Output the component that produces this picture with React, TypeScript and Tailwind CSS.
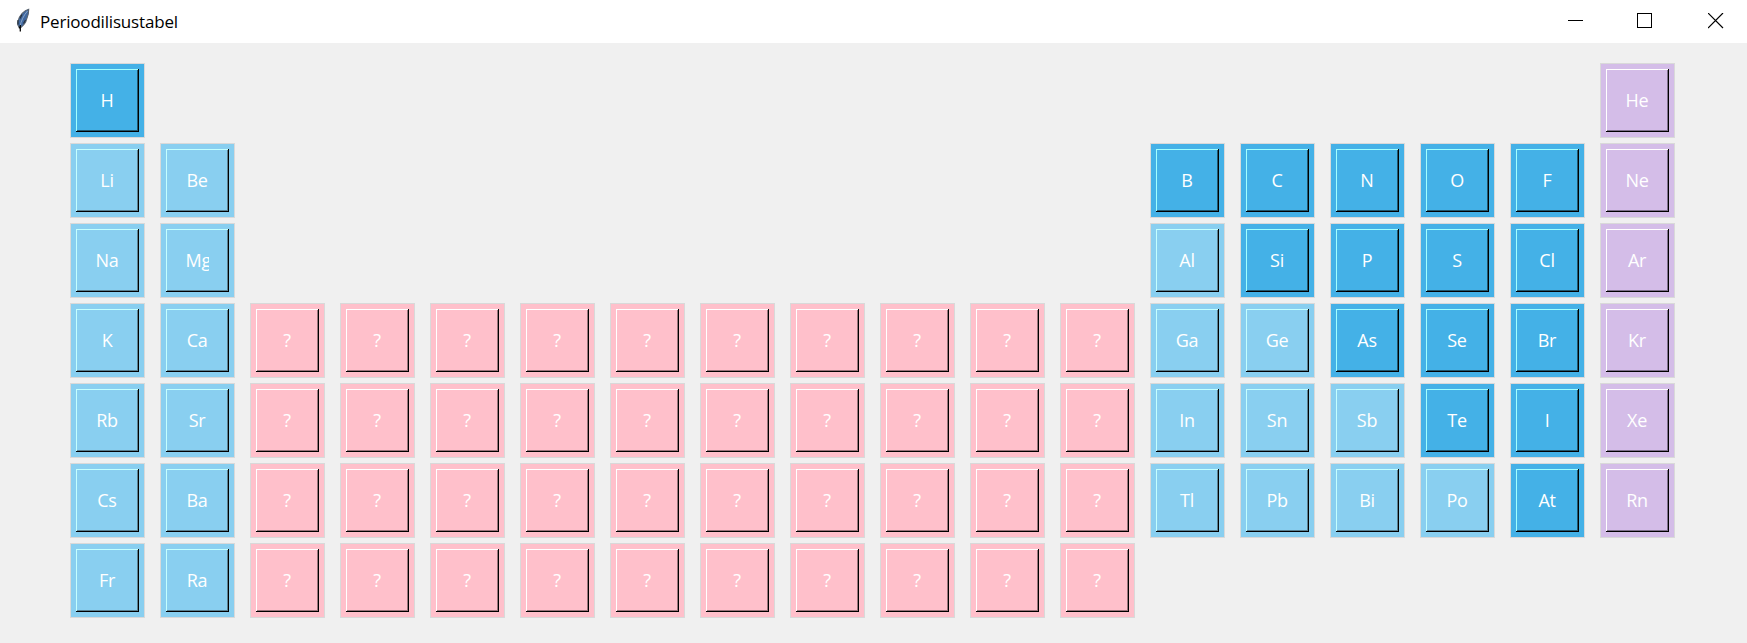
import React from "react";

type Kind = "n" | "m" | "g" | "t";

const tone: Record<Kind, string> = {
  n: "bg-[#44b1e7] [--hi:#a2ffff] [--lo:#22586f]",
  m: "bg-[#89cff0] [--hi:#c4ffff] [--lo:#5a8090]",
  g: "bg-[#d4bde8] [--hi:#ffffff] [--lo:#7f718b]",
  t: "bg-[#ffc0cb] [--hi:#ffffff] [--lo:#997379]",
};

const unknown = Array(10).fill("t:?").join(" ");
const gap = (count: number) => Array(count).fill(".").join(" ");

const rows = [
  `n:H ${gap(16)} g:He`,
  `m:Li m:Be ${gap(10)} n:B n:C n:N n:O n:F g:Ne`,
  `m:Na m:Mg ${gap(10)} m:Al n:Si n:P n:S n:Cl g:Ar`,
  `m:K m:Ca ${unknown} m:Ga m:Ge n:As n:Se n:Br g:Kr`,
  `m:Rb m:Sr ${unknown} m:In m:Sn m:Sb n:Te n:I g:Xe`,
  `m:Cs m:Ba ${unknown} m:Tl m:Pb m:Bi m:Po n:At g:Rn`,
  `m:Fr m:Ra ${unknown} ${gap(6)}`,
].map((row) => row.split(" "));

function Tile({ kind, symbol }: { kind: Kind; symbol: string }) {
  return (
    <div className={`h-[75px] w-[75px] border border-[#d9d9d9] p-[5px] ${tone[kind]}`}>
      <button className="flex h-[63px] w-[63px] items-center justify-center pr-px pb-[2px] text-[18px] leading-6 tracking-[-0.3px] text-white shadow-[inset_-1px_-1px_0_#000,inset_1px_1px_0_var(--hi),inset_-2px_-2px_0_var(--lo)]">
        <span className={symbol === "Mg" ? "w-[23px] overflow-hidden" : ""}>{symbol}</span>
      </button>
    </div>
  );
}

function Feather() {
  return (
    <svg className="ml-[16px] h-[26px] w-[14px]" viewBox="0 0 14 26">
      <path d="M12.7 1.2C8.6 2 3 7.500 1.700 14c-.3 2 .1 3.700 1.300 5.200l1.800.3C8.500 16.500 10 14.500 10.500 11.500 12 8 12.900 4.500 12.700 1.200Z" fill="#4068a0" stroke="#59636f" strokeWidth="1.100" />
      <path d="M11.500 3C7.500 7.500 5 13 3.900 19" fill="none" stroke="#9db4cf" strokeWidth=".8" />
      <path d="M2 12v4.500M6 6.500l-2 4M9.500 12l-2 3.500" fill="none" stroke="#28313d" strokeWidth="1.200" />
      <path d="M4.300 17v6.500M3.500 18.500v2" fill="none" stroke="#050505" strokeWidth="1.300" />
    </svg>
  );
}

export default function App() {
  return (
    <div className="flex h-[643px] w-[1747px] flex-col overflow-hidden bg-[#f0f0f0] font-['Open_Sans','Noto_Sans',sans-serif]">
      <header className="flex h-[43px] shrink-0 items-start justify-between bg-white">
        <div className="flex pt-[8px]">
          <Feather />
          <h1 className="ml-[10px] text-[17px] leading-[28px] tracking-[-0.18px] text-black">Perioodilisustabel</h1>
        </div>
        <div className="flex pt-[13px] pr-[23px] text-black">
          <svg className="mr-[53px] h-[16px] w-[16px]" viewBox="0 0 16 16" shapeRendering="crispEdges">
            <path d="M0 7.500h15" stroke="currentColor" />
          </svg>
          <svg className="mr-[55px] h-[16px] w-[16px]" viewBox="0 0 16 16" shapeRendering="crispEdges">
            <rect x=".5" y=".5" width="14" height="14" fill="none" stroke="currentColor" />
          </svg>
          <svg className="h-[16px] w-[16px]" viewBox="0 0 16 16">
            <path d="M0 0l15 15M15 0L0 15" stroke="currentColor" strokeWidth="1.200" />
          </svg>
        </div>
      </header>
      <main className="grid grid-cols-[repeat(18,75px)] gap-x-[15px] gap-y-[5px] pt-[20px] pl-[70px]">
        {rows.flatMap((row, r) =>
          row.map((cell, c) => {
            if (cell === ".") return <div key={`${r}-${c}`} />;
            const [kind, symbol] = cell.split(":");
            return <Tile key={`${r}-${c}`} kind={kind as Kind} symbol={symbol} />;
          }),
        )}
      </main>
    </div>
  );
}
